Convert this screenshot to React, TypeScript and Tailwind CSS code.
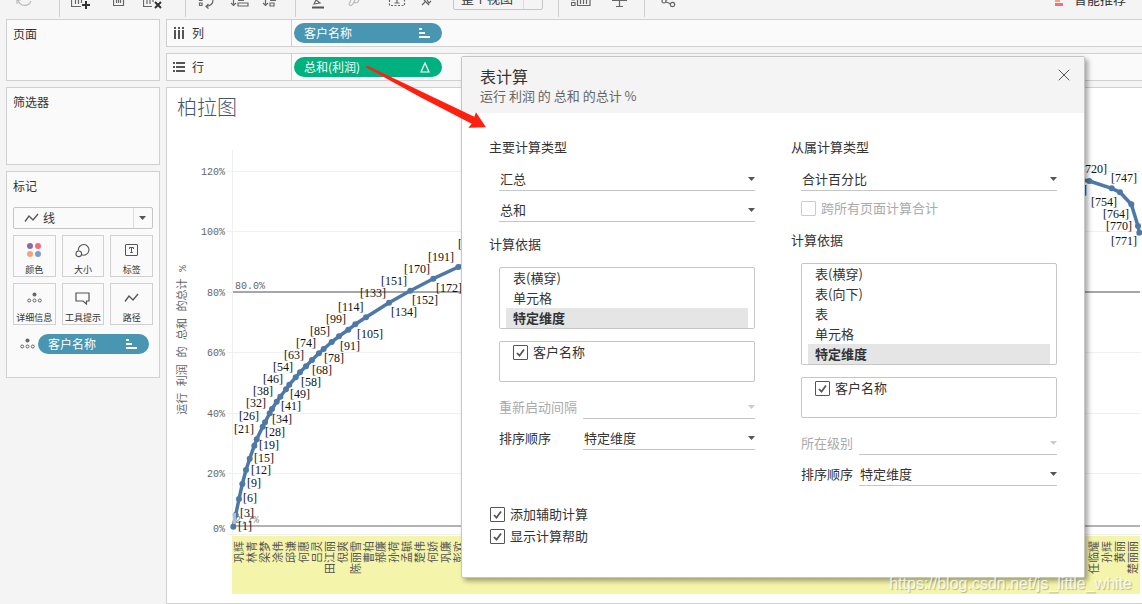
import { useState } from "react";
import type { ReactNode } from "react";
import { X } from "lucide-react";

const UI_FONT = "font-['Noto_Sans_CJK_SC',sans-serif]";

type Point = [number, number];

const LEFT_CURVE: Point[] = [
  [233.3, 526.7], [235.7, 515], [239, 499], [242.3, 484], [246, 470], [249.7, 458.7],
  [254.3, 445.7], [256.7, 439.3], [262.7, 426.7], [265, 422.3], [269.7, 413.3], [272, 409],
  [276.7, 401.7], [280.3, 396.7], [286, 389.3], [289.3, 384.7], [295.7, 377.3], [300, 372.3],
  [306, 366.3], [312, 360], [319, 353.3], [323.7, 349], [331.7, 342], [339, 336.3],
  [348.3, 329.7], [355.3, 324.3], [366, 317.3], [389, 302.7], [410.3, 290.7], [433.3, 278.7],
  [458.3, 267], [480, 258],
];

const RIGHT_CURVE: Point[] = [
  [1070, 178], [1089.3, 181], [1111.7, 188.3], [1120, 192.3], [1131.3, 204.3], [1138, 226], [1139.3, 232.7],
];

const MARK_LABELS: [string, number, number][] = [
  ["[1]", 238, 530], ["[3]", 240, 517], ["[6]", 243, 502], ["[9]", 247, 487], ["[12]", 251, 474],
  ["[15]", 254, 462], ["[19]", 259, 449], ["[28]", 265, 436], ["[34]", 272, 423], ["[41]", 281, 410],
  ["[49]", 290, 398], ["[58]", 301, 386], ["[68]", 312, 374], ["[78]", 324, 362], ["[91]", 340, 350],
  ["[105]", 357, 338], ["[134]", 391, 316], ["[152]", 412, 304], ["[172]", 436, 292],
  ["[21]", 234, 433], ["[26]", 239, 420], ["[32]", 246, 407], ["[38]", 253, 395], ["[46]", 263, 383],
  ["[54]", 273, 371], ["[63]", 284, 359], ["[74]", 296, 347], ["[85]", 310, 335], ["[99]", 326, 323],
  ["[114]", 338, 311], ["[133]", 360, 297], ["[151]", 381, 285], ["[170]", 404, 273], ["[191]", 428, 261],
  ["[212]", 458, 248],
  ["[719]", 1061, 194], ["[720]", 1081, 173], ["[747]", 1111, 182], ["[754]", 1091, 206], ["[764]", 1103, 218],
  ["[770]", 1106, 230], ["[771]", 1111, 245],
];

const TICKS: [string, number][] = [
  ["120%", 171], ["100%", 231], ["80%", 292], ["60%", 352], ["40%", 413], ["20%", 473],
];

const CUSTOMERS: [string, number][] = [
  ["巩辉", 239], ["林青", 252], ["梁梦", 265], ["涂伟", 278], ["邱谦", 291], ["何惠", 304],
  ["吕灵", 317], ["田江丽", 330], ["倪爽", 343], ["陈丽雪", 356], ["曹柏", 369], ["郝廉", 381],
  ["孙荷", 394], ["孟毓", 407], ["楚伟", 420], ["何娇", 433], ["巩廉", 446], ["彭欢", 459],
  ["任临耀", 1094], ["孙辉", 1107], ["黄丽", 1120], ["楚丽丽", 1133],
];

const toPoints = (points: Point[]) => points.map((p) => p.join(",")).join(" ");

function Curve({ points }: { points: Point[] }) {
  return (
    <g>
      <polyline points={toPoints(points)} fill="none" stroke="#4e79a7" strokeWidth="3.5" strokeLinejoin="round" />
      {points.map(([x, y]) => (
        <circle key={x} cx={x} cy={y} r="3" fill="#4e79a7" />
      ))}
    </g>
  );
}

function ParetoChart() {
  return (
    <svg viewBox="167 88 975 515" preserveAspectRatio="xMinYMin meet" className="block w-full" role="img" aria-label="柏拉图">
      <text x="177" y="115" fontSize="20" fill="#44546a" fontWeight="300" className={UI_FONT}>柏拉图</text>
      <rect x="232" y="536" width="908" height="58" fill="#f4f4aa" />
      <g stroke="#f0f0f0" shapeRendering="crispEdges">
        {TICKS.map(([label, y]) => (
          <line key={label} x1="227" x2="1141" y1={y + 0.5} y2={y + 0.5} />
        ))}
        <line x1="227" x2="1141" y1="534.5" y2="534.5" />
        <line x1="232.5" x2="232.5" y1="150" y2="536" />
      </g>
      <g fontSize="10" fill="#666" className="font-['Liberation_Mono',monospace]">
        {TICKS.map(([label, y]) => (
          <text key={label} x="225" y={y + 4} textAnchor="end">{label}</text>
        ))}
        <text x="225" y="532" textAnchor="end">0%</text>
        <text x="235" y="289">80.0%</text>
        <text x="235" y="523" fill="#888">2.7%</text>
      </g>
      <text transform="translate(186 340) rotate(-90)" textAnchor="middle" fontSize="11" fill="#666" className="font-['Liberation_Mono','Noto_Sans_CJK_SC',monospace]">
        运行 利润 的 总和 的总计 %
      </text>
      <rect x="233" y="291" width="907" height="2" fill="#a6a6a6" />
      <rect x="233" y="525" width="907" height="2" fill="#b3b3b3" />
      <Curve points={LEFT_CURVE} />
      <Curve points={RIGHT_CURVE} />
      <rect x="233" y="513" width="3" height="11" fill="#a9bfd8" />
      <g fontSize="12" fill="#111" className="font-['Liberation_Serif',serif]">
        {MARK_LABELS.map(([label, x, y]) => (
          <text key={label} x={x} y={y}>{label}</text>
        ))}
      </g>
      <g fontSize="11" fill="#555" className={UI_FONT}>
        {CUSTOMERS.map(([name, x]) => (
          <text key={x} transform={`translate(${x + 4} 541) rotate(-90)`} textAnchor="end">{name}</text>
        ))}
      </g>
    </svg>
  );
}

function SortIcon() {
  return (
    <svg width="11" height="10" viewBox="0 0 11 10" fill="#fff" aria-hidden="true">
      <rect x="0" y="0" width="3" height="2" />
      <rect x="0" y="4" width="6" height="2" />
      <rect x="0" y="8" width="11" height="2" />
    </svg>
  );
}

function DetailIcon() {
  return (
    <svg width="15" height="12" viewBox="0 0 15 12" fill="none" stroke="#666" aria-hidden="true">
      <circle cx="7.5" cy="2.5" r="2" fill="#666" stroke="none" />
      <circle cx="2.2" cy="8.5" r="1.5" />
      <circle cx="7.5" cy="8.5" r="1.5" />
      <circle cx="12.8" cy="8.5" r="1.5" />
    </svg>
  );
}

function LineIcon() {
  return (
    <svg width="15" height="10" viewBox="0 0 15 10" fill="none" stroke="#555" strokeWidth="1.3" aria-hidden="true">
      <path d="M1 8.5 L5 3 L9 7 L14 1" />
    </svg>
  );
}

function Pill({ color, label, icon }: { color: string; label: string; icon: ReactNode }) {
  return (
    <button type="button" className={`flex h-5 items-center justify-between rounded-full pr-3 pl-[10px] text-xs text-white ${color}`}>
      <span>{label}</span>
      {icon}
    </button>
  );
}

function Caret({ color }: { color: string }) {
  return (
    <svg width="7" height="4" viewBox="0 0 7 4" fill={color} aria-hidden="true" className="pointer-events-none col-start-1 row-start-1 self-center justify-self-end">
      <path d="M0 0 H7 L3.5 4 Z" />
    </svg>
  );
}

function Dropdown({ id, label, value, disabled = false }: { id: string; label?: string; value: string; disabled?: boolean }) {
  return (
    <div className="grid h-6 grow">
      <select
        id={id}
        aria-label={label}
        disabled={disabled}
        className="col-start-1 row-start-1 w-full appearance-none border-b border-[#c6c6c6] bg-transparent pl-px text-[13px] leading-5 text-[#333]"
      >
        <option>{value}</option>
      </select>
      <Caret color={disabled ? "#ccc" : "#555"} />
    </div>
  );
}

function CheckBox({ label, checked = false, disabled = false }: { label: string; checked?: boolean; disabled?: boolean }) {
  return (
    <label className={`flex items-center gap-[5px] text-[13px] leading-5 ${disabled ? "text-[#aaa]" : "text-[#333]"}`}>
      <span className="grid size-[15px]">
        <input
          type="checkbox"
          defaultChecked={checked}
          disabled={disabled}
          className="peer col-start-1 row-start-1 size-[15px] appearance-none rounded-[1px] border border-[#555] bg-white disabled:border-[#ccc]"
        />
        <svg viewBox="0 0 15 15" fill="none" stroke="#555" strokeWidth="1.8" aria-hidden="true" className="pointer-events-none invisible col-start-1 row-start-1 size-[15px] peer-checked:visible">
          <path d="M4 8 L6.5 10.7 L11 4.5" />
        </svg>
      </span>
      {label}
    </label>
  );
}

function OptionList({ label, options }: { label: string; options: string[] }) {
  const [selected, setSelected] = useState("特定维度");
  return (
    <ul role="listbox" aria-label={label} className="rounded-[2px] border border-[#c6c6c6] px-[6px]">
      {options.map((option) => (
        <li
          key={option}
          role="option"
          aria-selected={option === selected}
          onClick={() => setSelected(option)}
          className={`h-5 pl-[7px] text-[13px] leading-5 ${option === selected ? "bg-[#e5e5e5] font-bold" : ""}`}
        >
          {option}
        </li>
      ))}
    </ul>
  );
}

function ComputeUsing({ prefix, options, levelLabel, labelWidth }: { prefix: string; options: string[]; levelLabel: string; labelWidth: string }) {
  return (
    <>
      <h3 className="mt-3 leading-5">计算依据</h3>
      <div className="mt-[13px] ml-[10px] flex flex-col gap-3">
        <OptionList label="计算依据" options={options} />
        <div className="h-[41px] rounded-[2px] border border-[#c6c6c6] pl-[13px]">
          <CheckBox label="客户名称" checked />
        </div>
      </div>
      <div className="mt-[13px] ml-[10px] flex flex-col gap-[7px]">
        <div className="flex">
          <label htmlFor={`${prefix}-level`} className={`leading-6 text-[#aaa] ${labelWidth}`}>{levelLabel}</label>
          <Dropdown id={`${prefix}-level`} value="" disabled />
        </div>
        <div className="flex">
          <label htmlFor={`${prefix}-sort`} className={`leading-6 ${labelWidth}`}>排序顺序</label>
          <Dropdown id={`${prefix}-sort`} value="特定维度" />
        </div>
      </div>
    </>
  );
}

function TableCalculationDialog() {
  return (
    <section role="dialog" aria-label="表计算" className="absolute top-14 left-[461px] w-[624px] rounded-[2px] border border-[#c6c6c6] bg-white text-[13px] text-[#333] shadow-[3px_3px_5px_rgba(0,0,0,0.35)]">
      <header className="flex h-14 items-start justify-between bg-[#f4f4f4] pr-[10px] pl-[18px]">
        <div className="pt-[9px]">
          <h2 className="text-base leading-5">表计算</h2>
          <p className="leading-5 text-[#666]">运行 利润 的 总和 的总计 %</p>
        </div>
        <button type="button" aria-label="关闭" className="mt-2 text-[#555]">
          <X size={20} strokeWidth={1} absoluteStrokeWidth />
        </button>
      </header>
      <div className="grid grid-cols-2 gap-9 px-[27px] pt-6">
        <div>
          <h3 className="leading-5">主要计算类型</h3>
          <div className="mt-[10px] ml-[10px] flex flex-col gap-[7px]">
            <Dropdown id="primary-type" label="主要计算类型" value="汇总" />
            <Dropdown id="primary-aggregation" label="聚合" value="总和" />
          </div>
          <ComputeUsing prefix="primary" options={["表(横穿)", "单元格", "特定维度"]} levelLabel="重新启动间隔" labelWidth="w-[84px]" />
        </div>
        <div>
          <h3 className="leading-5">从属计算类型</h3>
          <div className="mt-[10px] ml-[10px] flex flex-col gap-[7px]">
            <Dropdown id="secondary-type" label="从属计算类型" value="合计百分比" />
            <CheckBox label="跨所有页面计算合计" disabled />
          </div>
          <ComputeUsing prefix="secondary" options={["表(横穿)", "表(向下)", "表", "单元格", "特定维度"]} levelLabel="所在级别" labelWidth="w-[58px]" />
        </div>
      </div>
      <div className="mt-[18px] flex flex-col gap-[2px] pb-[31px] pl-7">
        <CheckBox label="添加辅助计算" checked />
        <CheckBox label="显示计算帮助" checked />
      </div>
    </section>
  );
}

function ToolButton({ label, className, children }: { label: string; className: string; children: ReactNode }) {
  return (
    <button type="button" aria-label={label} className={className}>
      <svg width="20" height="12" viewBox="0 0 20 12" fill="none" stroke="#666" strokeWidth="1.2" aria-hidden="true">
        {children}
      </svg>
    </button>
  );
}

function Toolbar() {
  return (
    <div className="flex h-[19px] items-start overflow-hidden">
      <div className="flex h-[17px] w-[60px] shrink-0 items-start border-r border-[#d0d0d0]">
        <ToolButton label="重做" className="ml-[15px]">
          <path d="M3 0 C5 7 14 7 16 1 M2 4 V0 H6" stroke="#bbb" />
        </ToolButton>
      </div>
      <div className="flex h-[17px] w-[126px] shrink-0 items-start border-r border-[#d0d0d0]">
        <ToolButton label="新建工作表" className="ml-[11px]">
          <path d="M0.5 0 V6.5 H10 M4.5 0 V4 M7.5 0 V4 M10.5 0 V3" />
          <path d="M11 5 H19 M15 1 V9" stroke="#333" strokeWidth="2" />
        </ToolButton>
        <ToolButton label="复制工作表" className="ml-[22px]">
          <path d="M0.5 0 V5.5 H10.5 V0 M3.5 0 V3 M5.5 0 V3 M7.5 0 V3" />
        </ToolButton>
        <ToolButton label="清除工作表" className="ml-[10px]">
          <path d="M0.5 0 V6.5 H9 M4 0 V4 M7 0 V4 M10 0 V2" />
          <path d="M12 2 L18 8 M18 2 L12 8" stroke="#333" strokeWidth="2" />
        </ToolButton>
      </div>
      <div className="flex h-[17px] w-[110px] shrink-0 items-start border-r border-[#d0d0d0]">
        <ToolButton label="交换行和列" className="ml-3">
          <path d="M1.5 0 V0.5 H4 V0 M1.5 3 H4 V5.5 H1.5 Z M15 0 C15 4 12 6 8 6.5 M10.5 4 L8 6.5 L10.5 8.5" />
        </ToolButton>
        <ToolButton label="升序排序" className="ml-3">
          <path d="M3.5 0 V5 M1 3 L3.5 5.5 L6 3 M8 0.5 H14 M8 3 H18 V6 H8 Z" />
        </ToolButton>
        <ToolButton label="降序排序" className="ml-3">
          <path d="M3.5 0 V5 M1 3 L3.5 5.5 L6 3 M8 0.5 H14 M8 3 H12 V6 H8 Z" />
        </ToolButton>
      </div>
      <div className="flex h-[17px] w-[263px] shrink-0 items-start border-r border-[#d0d0d0]">
        <ToolButton label="突出显示" className="ml-[15px]">
          <path d="M3 4 L5 0 L9 3 Z M3 4 L9 3" />
          <path d="M1 7.5 H13" stroke="#555" strokeWidth="2" />
        </ToolButton>
        <ToolButton label="分组成员" className="ml-[17px]">
          <path d="M1 4 C2 7 5 5 6 2 L7 0 M1 4 L3 0 M6 2 C9 4 10 2 11 0" stroke="#bbb" />
        </ToolButton>
        <ToolButton label="显示标记标签" className="ml-5">
          <path d="M1.5 0 V5.5 H16.5 V0" strokeDasharray="2 1.5" />
          <path d="M9 0 V3 M6.5 3 H11.5" />
        </ToolButton>
        <ToolButton label="固定轴" className="ml-[13px]">
          <path d="M1 5 L5 1 M3 0 L8 5 M6 0 L8 3 L10 1" />
        </ToolButton>
        <div className="-mt-[14px] ml-3 grid h-6 w-[90px] rounded-[2px] border border-[#c6c6c6]">
          <select aria-label="视图大小" className="col-start-1 row-start-1 w-full appearance-none pl-[7px] text-[13px] text-[#333]">
            <option>整个视图</option>
          </select>
          <span className="pointer-events-none col-start-1 row-start-1 w-[19px] justify-self-end border-l border-[#ddd]" />
        </div>
      </div>
      <div className="flex h-[17px] w-[86px] shrink-0 items-start border-r border-[#d0d0d0]">
        <ToolButton label="显示卡" className="ml-3">
          <path d="M0.5 0 H4 M0.5 2.5 H4 V5.5 H0.5 Z M6.5 0 V5.5 H19 V0 M9.5 0 V4 M12.5 0 V4 M15.5 0 V4" />
        </ToolButton>
        <ToolButton label="演示模式" className="ml-[21px]">
          <path d="M0 0.5 H15 M7.5 1 V6.5 M4 6.5 H11" />
        </ToolButton>
      </div>
      <ToolButton label="共享" className="ml-4 shrink-0">
        <circle cx="3" cy="1" r="2" />
        <circle cx="11.5" cy="4.5" r="2.2" />
        <path d="M5 2 L9.5 3.7 M5 0 L8 -1" />
      </ToolButton>
      <button type="button" className="ml-auto flex shrink-0 items-start gap-[11px] pr-4 text-[13px]">
        <svg width="8" height="7" viewBox="0 0 8 7" aria-hidden="true">
          <rect width="5" height="2" fill="#f2a472" />
          <rect y="3" width="8" height="3" fill="#f46d82" />
        </svg>
        <span className="-mt-[11px] leading-5 text-[#333]">智能推荐</span>
      </button>
    </div>
  );
}

function Shelf({ label, icon, children }: { label: string; icon: ReactNode; children: ReactNode }) {
  return (
    <div className="flex h-7 border border-r-0 border-[#d0d0d0] bg-[#fafafa]">
      <div className="flex w-[125px] items-center gap-[7px] border-r border-[#d0d0d0] pl-[6px] text-xs text-[#333]">
        {icon}
        {label}
      </div>
      <div className="grid w-[150px] items-center pl-[2px]">{children}</div>
    </div>
  );
}

function MarkTile({ label, icon }: { label: string; icon: ReactNode }) {
  return (
    <button type="button" className="flex h-[42px] flex-col items-center border border-[#d0d0d0] text-[9px] leading-3 whitespace-nowrap text-[#333]">
      <span className="flex h-7 items-center">{icon}</span>
      {label}
    </button>
  );
}

function MarksCard() {
  return (
    <section className="h-[207px] border border-[#d0d0d0] bg-[#fafafa] px-[6px] pt-1">
      <h2 className="leading-5">标记</h2>
      <div className="mt-[11px] grid h-[22px] rounded-[2px] border border-[#c6c6c6]">
        <select aria-label="标记类型" className="col-start-1 row-start-1 w-full appearance-none pl-[29px] text-xs">
          <option>线</option>
        </select>
        <span className="pointer-events-none col-start-1 row-start-1 self-center pl-[10px]"><LineIcon /></span>
        <span className="pointer-events-none col-start-1 row-start-1 grid w-[19px] border-l border-[#ddd] pr-[6px] justify-self-end">
          <Caret color="#555" />
        </span>
      </div>
      <div className="mt-[6px] grid grid-cols-3 gap-[6px]">
        <MarkTile
          label="颜色"
          icon={
            <svg width="14" height="14" viewBox="0 0 14 14" aria-hidden="true">
              <circle cx="3" cy="3" r="3" fill="#8a6d9b" />
              <circle cx="11" cy="3" r="3" fill="#f9697c" />
              <circle cx="3" cy="11" r="3" fill="#f5a57a" />
              <circle cx="11" cy="11" r="3" fill="#7a9fcf" />
            </svg>
          }
        />
        <MarkTile
          label="大小"
          icon={
            <svg width="15" height="15" viewBox="0 0 15 15" fill="none" stroke="#555" strokeWidth="1.1" aria-hidden="true">
              <path d="M3.4 7.6 A5.3 5.3 0 1 1 6.7 11.8" />
              <circle cx="3.8" cy="10.8" r="2.8" />
            </svg>
          }
        />
        <MarkTile
          label="标签"
          icon={
            <svg width="13" height="12" viewBox="0 0 13 12" fill="none" stroke="#555" aria-hidden="true">
              <rect x="0.5" y="0.5" width="12" height="11" rx="0.5" />
              <path d="M4.5 5 V3.5 H8.5 V5 M6.5 3.5 V8.5 M5.2 8.5 H7.8" />
            </svg>
          }
        />
        <MarkTile label="详细信息" icon={<DetailIcon />} />
        <MarkTile
          label="工具提示"
          icon={
            <svg width="15" height="13" viewBox="0 0 15 13" fill="none" stroke="#555" strokeWidth="1.2" aria-hidden="true">
              <path d="M1 1 H14 V9 H11.5 V12 L8 9 H1 Z" />
            </svg>
          }
        />
        <MarkTile label="路径" icon={<LineIcon />} />
      </div>
      <div className="mt-[9px] flex items-center gap-[3px] pr-1 pl-[7px]">
        <DetailIcon />
        <div className="grid flex-1">
          <Pill color="bg-[#4996b2]" label="客户名称" icon={<SortIcon />} />
        </div>
      </div>
    </section>
  );
}

export default function App() {
  return (
    <div className={`relative min-h-screen overflow-hidden bg-[#f4f4f4] text-[#333] ${UI_FONT}`}>
      <Toolbar />
      <div className="flex gap-[6px] pl-[6px]">
        <aside className="flex w-[154px] shrink-0 flex-col gap-[6px] text-xs">
          <section className="h-[62px] border border-[#d0d0d0] bg-[#fafafa] px-[6px] pt-1">
            <h2 className="leading-5">页面</h2>
          </section>
          <section className="h-[78px] border border-[#d0d0d0] bg-[#fafafa] px-[6px] pt-1">
            <h2 className="leading-5">筛选器</h2>
          </section>
          <MarksCard />
        </aside>
        <main className="flex min-w-0 flex-1 flex-col gap-[6px]">
          <Shelf
            label="列"
            icon={
              <svg width="12" height="12" viewBox="0 0 12 12" fill="#555" aria-hidden="true">
                <path d="M1 0h2v2h-2z M5 0h2v2h-2z M9 0h2v2h-2z M1 3h2v9h-2z M5 3h2v9h-2z M9 3h2v9h-2z" />
              </svg>
            }
          >
            <Pill color="bg-[#4996b2]" label="客户名称" icon={<SortIcon />} />
          </Shelf>
          <Shelf
            label="行"
            icon={
              <svg width="12" height="11" viewBox="0 0 12 11" fill="#555" aria-hidden="true">
                <path d="M0 0h2v2h-2z M0 4h2v2h-2z M0 8h2v2h-2z M3 0h9v2h-9z M3 4h9v2h-9z M3 8h9v2h-9z" />
              </svg>
            }
          >
            <Pill
              color="bg-[#00b180]"
              label="总和(利润)"
              icon={
                <svg width="10" height="11" viewBox="0 0 10 11" fill="none" stroke="#fff" strokeWidth="1.2" aria-hidden="true">
                  <path d="M5 1 L9 10 H1 Z" />
                </svg>
              }
            />
          </Shelf>
          <div className="border border-r-0 border-[#d0d0d0] bg-white">
            <ParetoChart />
          </div>
        </main>
      </div>
      <TableCalculationDialog />
      <p className="pointer-events-none absolute right-[10px] bottom-2 font-['Liberation_Sans',sans-serif] text-base leading-6 text-white/80 [text-shadow:1px_1px_1px_rgba(0,0,0,0.25)]">
        https://blog.csdn.net/js_little_white
      </p>
      <svg width="121" height="63" viewBox="366 65 121 63" aria-hidden="true" className="pointer-events-none absolute top-[65px] left-[366px]">
        <path d="M366 66 L368 66 L474.3 116.7 L476 112.3 L486 127.3 L468.3 127.7 L471.7 123.7 L420 97 L366.5 67.5 Z" fill="#ff2010" />
      </svg>
    </div>
  );
}
